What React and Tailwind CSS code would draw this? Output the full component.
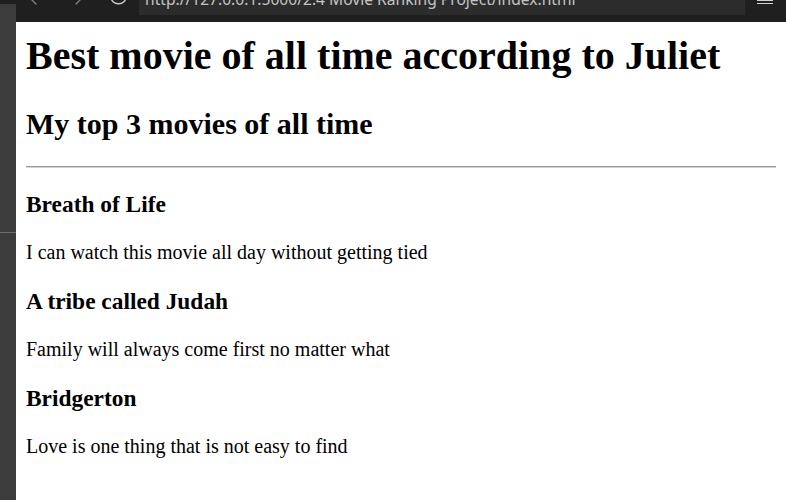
export default function App() {
  const movies = [
    { title: "Breath of Life", text: "I can watch this movie all day without getting tied" },
    { title: "A tribe called Judah", text: "Family will always come first no matter what" },
    { title: "Bridgerton", text: "Love is one thing that is not easy to find" },
  ];
  return (
    <div className="flex h-[500px] w-[786px] overflow-hidden bg-white">
      <div className="flex w-4 shrink-0 flex-col">
        <div className="h-1 bg-[#1f1f1f]" />
        <div className="h-[228px] bg-[#3c3c3c]" />
        <div className="h-px bg-[#6e6e6e]" />
        <div className="flex-1 bg-[#3c3c3c]" />
      </div>
      <div className="flex min-w-0 flex-1 flex-col">
        <div className="flex h-[22px] shrink-0 items-start bg-[#1f1f1f]">
          <svg className="ml-[12px] shrink-0" width="10" height="6" viewBox="0 0 10 6">
            <path d="M1.5 -2.5 L8 4" stroke="#7c7c7c" strokeWidth="1.4" fill="none" strokeLinecap="round" />
          </svg>
          <svg className="ml-[36px] shrink-0" width="10" height="6" viewBox="0 0 10 6">
            <path d="M8.5 -2.5 L2 4" stroke="#7c7c7c" strokeWidth="1.4" fill="none" strokeLinecap="round" />
          </svg>
          <svg className="ml-[25px] shrink-0" width="19" height="7" viewBox="0 0 19 7">
            <path d="M2.2 -1 A8 8 0 0 0 16.8 -1" stroke="#c8c8c8" strokeWidth="1.4" fill="none" />
          </svg>
          <div className="ml-[11px] h-[15px] w-[606px] shrink-0 overflow-hidden bg-[#2c2c2c]">
            <div className="-mt-[8.4px] pl-[6px] font-['Noto_Sans',sans-serif] text-[15.6px] leading-[15.6px] whitespace-nowrap text-[#c4c4c4]">
              http://127.0.0.1:5000/2.4 Movie Ranking Project/index.html
            </div>
          </div>
          <div className="ml-[12px] flex w-4 shrink-0 flex-col">
            <div className="h-px bg-[#d0d0d0]" />
            <div className="mt-[2px] h-px bg-[#d0d0d0]" />
          </div>
        </div>
        <main className="px-[10px] font-['Liberation_Serif','Times_New_Roman',serif] text-black">
          <h1 className="mt-[11px] text-[40px] font-bold leading-[46px]">
            Best movie of all time according to Juliet
          </h1>
          <h2 className="mt-[27px] text-[30px] font-bold leading-[35px]">My top 3 movies of all time</h2>
          <hr className="mt-[25px] h-0 border-t border-b border-t-[#9a9a9a] border-b-[#d4d4d4]" />
          {movies.map((m, i) => (
            <div key={m.title}>
              <h3
                className={
                  i === 0
                    ? "mt-[23px] text-[23.4px] font-bold leading-[27px]"
                    : "mt-[24.6px] text-[23.4px] font-bold leading-[27px]"
                }
              >
                {m.title}
              </h3>
              <p className="mt-[22.6px] text-[20px] leading-[23px]">{m.text}</p>
            </div>
          ))}
        </main>
      </div>
    </div>
  );
}
